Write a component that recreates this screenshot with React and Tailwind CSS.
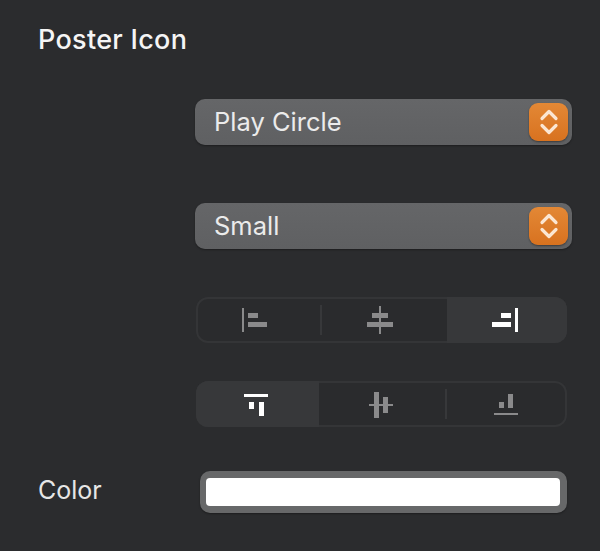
import React from 'react';

const font = "font-['Inter','Liberation_Sans',sans-serif]";

const Bars = ({ children, active }) => (
  <svg width="32" height="32" viewBox="0 0 32 32" fill={active ? '#ffffff' : '#8a8a8b'}>
    {children}
  </svg>
);

const Chevrons = () => (
  <svg width="20" height="30" viewBox="0 0 20 30" fill="none" stroke="#fbe6d2" strokeWidth="3.2" strokeLinecap="round" strokeLinejoin="round">
    <path d="M3 11.5 10 4.5l7 7" />
    <path d="M3 18.5l7 7 7-7" />
  </svg>
);

const SelectBox = ({ label }) => (
  <div className="flex h-[46px] w-[377px] items-center justify-between rounded-[10px] bg-gradient-to-b from-[#656668] to-[#5f6062] pl-[19px] pr-1 shadow-[0_1px_2px_rgba(0,0,0,0.35)]">
    <span className="text-[25.5px] leading-none text-[#ebebeb]">{label}</span>
    <div className="flex h-[38px] w-[39px] items-center justify-center rounded-[9px] bg-gradient-to-b from-[#e38835] to-[#d8721f] shadow-[0_1px_2px_rgba(0,0,0,0.4)]">
      <Chevrons />
    </div>
  </div>
);

// segmented control, selected segment covers the inset outline
const Segmented = ({ items }) => (
  <div className="flex h-[46px] w-[371px] overflow-hidden rounded-[12px] bg-[#2a2b2d] shadow-[inset_0_0_0_2px_#343537]">
    {items.map((item, i) => (
      <div
        key={i}
        className={`relative flex items-center justify-center ${item.cell} ${item.selected ? 'bg-[#37383a]' : ''}`}
      >
        {item.icon}
        {item.separator && (
          <span className={`absolute top-[8px] z-10 h-[30px] w-[2px] bg-[#37383a] ${item.separator}`} />
        )}
      </div>
    ))}
  </div>
);

export default function App() {
  const alignRow = [
    {
      cell: 'w-[124px] pr-[6px]',
      separator: '-right-[2px]',
      icon: (
        <Bars>
          <rect x="3" y="4" width="2" height="24" />
          <rect x="9" y="9" width="10" height="5" />
          <rect x="9" y="18" width="19" height="5" />
        </Bars>
      ),
    },
    {
      cell: 'w-[127px] pr-[7px]',
      icon: (
        <Bars>
          <rect x="15" y="2" width="2" height="28" />
          <rect x="8" y="9" width="16" height="5" />
          <rect x="3" y="18" width="26" height="5" />
        </Bars>
      ),
    },
    {
      cell: 'w-[120px] pr-[4px]',
      selected: true,
      icon: (
        <Bars active>
          <rect x="26" y="4" width="3" height="24" />
          <rect x="12" y="9" width="10" height="5" />
          <rect x="3" y="18" width="19" height="5" />
        </Bars>
      ),
    },
  ];
  const valignRow = [
    {
      cell: 'w-[123px] pr-[3px]',
      selected: true,
      icon: (
        <Bars active>
          <rect x="4" y="6" width="24" height="3" />
          <rect x="9" y="14" width="5" height="7" />
          <rect x="19" y="14" width="5" height="14" />
        </Bars>
      ),
    },
    {
      cell: 'w-[127px] pr-[3px]',
      separator: '-right-px',
      icon: (
        <Bars>
          <rect x="4" y="16" width="24" height="2" />
          <rect x="9" y="4" width="5" height="26" />
          <rect x="18" y="9" width="5" height="16" />
        </Bars>
      ),
    },
    {
      cell: 'w-[121px] pr-px',
      icon: (
        <Bars>
          <rect x="4" y="25" width="24" height="2" />
          <rect x="9" y="14" width="5" height="6" />
          <rect x="18" y="6" width="5" height="14" />
        </Bars>
      ),
    },
  ];

  return (
    <div className={`${font} h-[551px] w-[600px] overflow-hidden bg-[#2b2c2e] pl-[38px] pt-[24px]`}>
      <h1 className="text-[27px] font-medium leading-[32px] tracking-[0.3px] text-[#f5f5f5]">Poster Icon</h1>
      <div className="ml-[157px] mt-[43px] flex flex-col items-start">
        <SelectBox label="Play Circle" />
        <div className="mt-[58px]">
          <SelectBox label="Small" />
        </div>
        <div className="ml-px mt-[48px]">
          <Segmented items={alignRow} />
        </div>
        <div className="ml-px mt-[38px]">
          <Segmented items={valignRow} />
        </div>
      </div>
      <div className="mt-[44px] flex items-center">
        <span className="mb-[4px] w-[162px] text-[25px] leading-none text-[#e6e6e6]">Color</span>
        <div className="h-[42px] w-[367px] rounded-[10px] bg-[#676869] pb-[7px] pl-[6px] pr-[7px] pt-[7px] shadow-[0_1px_2px_rgba(0,0,0,0.35)]">
          <div className="h-full w-full rounded-[4px] bg-white" />
        </div>
      </div>
    </div>
  );
}
